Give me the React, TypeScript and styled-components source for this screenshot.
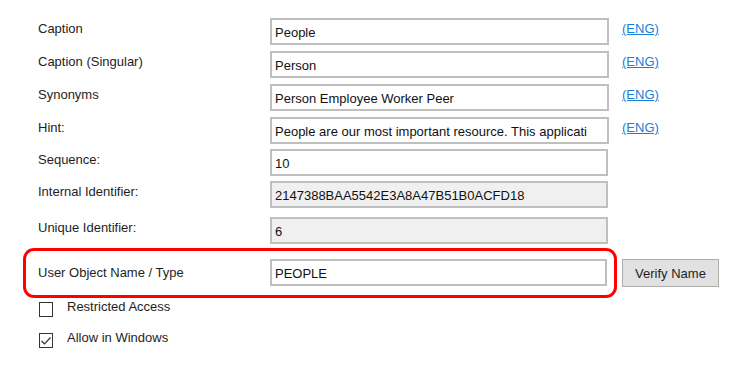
import React from "react";
import styled, { createGlobalStyle } from "styled-components";

const Global = createGlobalStyle`
  html, body { margin: 0; padding: 0; background: #ffffff; }
  body { font-family: "Liberation Sans", Arial, sans-serif; font-size: 13px; color: #1e1e1e; }
  * { box-sizing: border-box; }
`;

const Page = styled.div`
  width: 740px;
  height: 365px;
  padding-top: 18px;
  display: flex;
  flex-direction: column;
  background: #fff;
  overflow: hidden;
`;

const FieldRow = styled.div<{ $top: number }>`
  display: grid;
  grid-template-columns: 232px 339px auto;
  align-items: start;
  height: 27px;
  margin-top: ${(p) => p.$top}px;
  padding-left: 38px;
`;

const Label = styled.span<{ $pad?: number }>`
  font-size: 13px;
  line-height: 15px;
  padding-top: ${(p) => p.$pad ?? 3}px;
  color: #1e1e1e;
  white-space: nowrap;
`;

const Field = styled.input<{ $readonly?: boolean; $w?: number }>`
  width: ${(p) => p.$w ?? 339}px;
  height: 27px;
  margin: 0;
  padding: 1px 0 0 3px;
  border: 2px solid #bfbfbf;
  border-radius: 0;
  background: ${(p) => (p.$readonly ? "#f0f0f0" : "#ffffff")};
  font-family: "Liberation Sans", Arial, sans-serif;
  font-size: 13px;
  color: #111;
  outline: none;
`;

const LangLink = styled.a`
  margin-left: 13px;
  font-size: 13px;
  line-height: 15px;
  padding-top: 3px;
  color: #1a7dd7;
  text-decoration: underline;
  cursor: pointer;
`;

const HighlightLine = styled.div`
  display: flex;
  align-items: flex-start;
  margin-top: 4px;
  margin-left: 23px;
`;

const Highlight = styled.div`
  width: 594px;
  height: 50px;
  border: 3px solid #ff0000;
  border-radius: 11px;
  padding: 8px 0 0 12px;
  display: grid;
  grid-template-columns: 232px 337px;
  align-items: start;
`;

const Button = styled.button`
  margin: 11px 0 0 5px;
  width: 97px;
  height: 28px;
  border: 1px solid #adadad;
  background: #e1e1e1;
  font-family: "Liberation Sans", Arial, sans-serif;
  font-size: 13px;
  color: #1e1e1e;
  padding: 0;
`;

const CheckRow = styled.label<{ $top: number }>`
  display: flex;
  align-items: flex-start;
  margin-top: ${(p) => p.$top}px;
  padding-left: 39px;
  height: 16px;
`;

const Box = styled.span`
  width: 14px;
  height: 15px;
  margin-top: 3px;
  border: 1px solid #333333;
  background: #fff;
  display: flex;
  align-items: center;
  justify-content: center;
`;

const CheckText = styled.span`
  margin-left: 14px;
  font-size: 13px;
  line-height: 15px;
  color: #1e1e1e;
`;

const rows: { label: string; value: string; top: number; link?: boolean; ro?: boolean; w?: number }[] = [
  { label: "Caption", value: "People", top: 0, link: true },
  { label: "Caption (Singular)", value: "Person", top: 6, link: true },
  { label: "Synonyms", value: "Person Employee Worker Peer", top: 6, link: true },
  { label: "Hint:", value: "People are our most important resource. This applicati", top: 6, link: true },
  { label: "Sequence:", value: "10", top: 5, w: 338 },
  { label: "Internal Identifier:", value: "2147388BAA5542E3A8A47B51B0ACFD18", top: 5, ro: true, w: 338 },
  { label: "Unique Identifier:", value: "6", top: 9, ro: true, w: 338 },
];

export default function App() {
  return (
    <>
      <Global />
      <Page>
        {rows.map((r) => (
          <FieldRow key={r.label} $top={r.top}>
            <Label>{r.label}</Label>
            <Field defaultValue={r.value} readOnly $readonly={r.ro} $w={r.w} />
            {r.link ? <LangLink>(ENG)</LangLink> : <span />}
          </FieldRow>
        ))}
        <HighlightLine>
          <Highlight>
            <Label $pad={6}>User Object Name / Type</Label>
            <Field defaultValue="PEOPLE" readOnly $w={337} />
          </Highlight>
          <Button>Verify Name</Button>
        </HighlightLine>
        <CheckRow $top={1}>
          <Box />
          <CheckText>Restricted Access</CheckText>
        </CheckRow>
        <CheckRow $top={15}>
          <Box>
            <svg width="12" height="12" viewBox="0 0 12 12">
              <path d="M1.5 6 L4.5 9 L10.5 2.5" fill="none" stroke="#333" strokeWidth="1.2" />
            </svg>
          </Box>
          <CheckText>Allow in Windows</CheckText>
        </CheckRow>
      </Page>
    </>
  );
}
